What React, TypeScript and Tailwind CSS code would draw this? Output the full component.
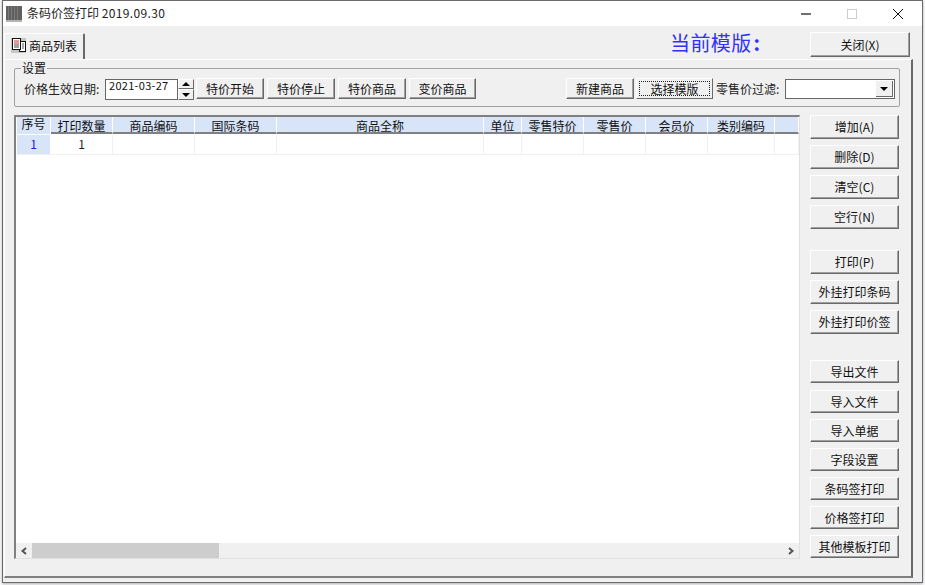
const CJK = "font-['Noto_Sans_CJK_SC','Liberation_Sans',sans-serif]";

function WinButton({ label, className = "" }: { label: string; className?: string }) {
  return (
    <div className={`flex items-center justify-center bg-[#f0f0f0] border border-t-white border-l-white border-r-[#696969] border-b-[#696969] shadow-[inset_-1px_-1px_0_#a0a0a0] text-[12px] text-[#111] ${className}`}>
      {label}
    </div>
  );
}

function Spacer({ h }: { h: string }) {
  return <div className={h} />;
}

const columns: [string, string][] = [
  ["打印数量", "w-[62px]"],
  ["商品编码", "w-[82px]"],
  ["国际条码", "w-[82px]"],
  ["商品全称", "w-[207px]"],
  ["单位", "w-[38px]"],
  ["零售特价", "w-[62px]"],
  ["零售价", "w-[62px]"],
  ["会员价", "w-[62px]"],
  ["类别编码", "w-[67px]"],
  ["", "w-[24px]"],
];

export default function App() {
  return (
    <div className={`w-[925px] h-[585px] overflow-hidden bg-white ${CJK}`}>
      <div className="ml-[2px] w-[921px] h-[583px] flex flex-col border border-[#6b6b6b] bg-[#f0f0f0] shadow-[0_1px_3px_#a8a8b0]">
        {/* Title bar */}
        <div className="h-[25px] shrink-0 bg-white flex items-center">
          <svg className="ml-[3px]" width="16" height="16" viewBox="0 0 16 16">
            <rect width="16" height="16" fill="#d8d8d8" />
            <path d="M1 0v14M4 0v14M7 0v14M10 0v14M13 0v14M15 0v14" stroke="#2e2e2e" strokeWidth="1.4" />
            <path d="M2.5 0v14M5.5 0v14M8.5 0v14M11.5 0v14" stroke="#7a7a7a" strokeWidth="1" />
            <rect y="14" width="16" height="2" fill="#b4b4b4" />
          </svg>
          <span className="ml-[5px] pb-[1px] text-[12px] text-[#222] whitespace-nowrap">
            条码价签打印 <span className="tracking-[0.35px]">2019.09.30</span>
          </span>
          <div className="ml-auto flex items-center text-[#222]">
            <svg width="46" height="25" viewBox="0 0 46 25"><path d="M18 13h10" stroke="#111" strokeWidth="1.2" /></svg>
            <svg width="46" height="25" viewBox="0 0 46 25"><rect x="18.5" y="8.5" width="9" height="9" fill="none" stroke="#ccc" /></svg>
            <svg width="46" height="25" viewBox="0 0 46 25" className="mr-[1px]"><path d="M18 8l10 10M28 8L18 18" stroke="#111" fill="none" /></svg>
          </div>
        </div>

        {/* Tab strip row */}
        <div className="h-[33px] shrink-0 flex pl-[1px] pr-[12px]">
          <div className="mt-[7px] w-[81px] h-[26px] -mb-px z-10 flex items-center bg-[#f0f0f0] border-t border-l border-t-white border-l-white border-r-2 border-r-[#696969] rounded-tr-[2px] pl-[6px] pb-[2px]">
            <svg width="15" height="15" viewBox="0 0 15 15" className="shrink-0">
              <rect width="15" height="15" fill="#c6c6c6" />
              <rect x="8.5" y="3.5" width="6" height="10" fill="#fff" stroke="#111" />
              <rect x="1.5" y="0.5" width="8" height="11" fill="#fff" stroke="#111" />
              <path d="M3 3h5M3 5h5" stroke="#d03030" />
              <path d="M3 7h5M3 9h5" stroke="#444" />
              <path d="M11 6h2M11 8h2M11 10h2" stroke="#555" />
            </svg>
            <span className="ml-[3px] text-[12px] text-[#111]">商品列表</span>
          </div>
          <span className="ml-[585px] mt-[3px] h-[27px] leading-[27px] text-[20px] tracking-[0.4px] text-[#3030ff] whitespace-nowrap">
            当前模版<span className="pl-[2px] font-bold">:</span>
          </span>
          <WinButton label="关闭(X)" className="ml-auto mt-[6px] w-[100px] h-[25px]" />
        </div>

        {/* Tab page */}
        <div className="ml-[1px] w-[909px] h-[519px] shrink-0 border-t border-l border-t-white border-l-white border-r-2 border-b-2 border-r-[#696969] border-b-[#808080] pl-[9px] pt-[9px] flex flex-col">
          {/* Group box */}
          <fieldset className="w-[885px] h-[45px] shrink-0 border border-[#a0a0a0] rounded-[2px] pl-[9px] pr-[4px] m-0 -mt-[7px]">
            <legend className="-ml-[3px] px-[1px] text-[12px] leading-[12px] text-[#111]">设置</legend>
            <div className="flex items-start h-[22px] mt-[4px]">
              <span className="w-[81px] text-[12px] leading-[22px] text-[#222] whitespace-nowrap">价格生效日期:</span>
              <div className="mt-[1px] w-[73px] h-[21px] bg-white border border-[#666] pl-[3px] text-[11px] tracking-[0.3px] leading-[11px] text-[#111]">2021-03-27</div>
              <div className="w-[16px] mt-[1px] h-[21px] flex flex-col">
                <div className="h-[10px] flex items-center justify-center bg-[#f0f0f0] border border-t-white border-l-white border-r-[#696969] border-b-[#696969]">
                  <div className="border-x-[4px] border-x-transparent border-b-[4px] border-b-black" />
                </div>
                <div className="h-[11px] flex items-center justify-center bg-[#f0f0f0] border border-t-white border-l-white border-r-[#696969] border-b-[#696969]">
                  <div className="border-x-[4px] border-x-transparent border-t-[4px] border-t-black" />
                </div>
              </div>
              <WinButton label="特价开始" className="ml-[2px] w-[68px] h-[21px]" />
              <WinButton label="特价停止" className="ml-[3px] w-[68px] h-[21px]" />
              <WinButton label="特价商品" className="ml-[3px] w-[68px] h-[21px]" />
              <WinButton label="变价商品" className="ml-[3px] w-[67px] h-[21px]" />
              <WinButton label="新建商品" className="ml-[90px] w-[68px] h-[21px]" />
              <div className="ml-[2px] w-[77px] h-[21px] p-[2px] bg-[#f0f0f0] border border-t-white border-l-white border-r-[#696969] border-b-[#696969]">
                <div className="w-full h-full flex items-center justify-center border border-dotted border-[#222] text-[12px] text-[#111]">选择模版</div>
              </div>
              <span className="ml-[3px] w-[69px] text-[12px] leading-[22px] text-[#222] whitespace-nowrap">零售价过滤:</span>
              <div className="mt-[1px] w-[110px] h-[20px] bg-white border border-[#666] flex justify-end p-[1px]">
                <div className="w-[17px] h-full flex items-center justify-center bg-[#f0f0f0] border-r border-b border-[#696969]">
                  <div className="border-x-[4px] border-x-transparent border-t-[4px] border-t-black" />
                </div>
              </div>
            </div>
          </fieldset>

          {/* Main row */}
          <div className="mt-[8px] flex flex-1 min-h-0">
            {/* Grid */}
            <div className="w-[786px] h-[444px] bg-white border-t-2 border-l-2 border-t-[#808080] border-l-[#808080] border-r border-b border-r-[#e0e0e0] border-b-[#e0e0e0] flex flex-col">
              <div className="flex flex-col flex-1 pl-[1px]">
                <div className="flex h-[18px] text-[12px] text-[#111]">
                  <div className="w-[34px] h-[17px] leading-[14px] bg-[#d8e4f8] border-r border-white text-center">序号</div>
                  {columns.map(([t, w], i) => (
                    <div key={i} className={`${w} shrink-0 h-[17px] leading-[17px] bg-[#d8e4f8] border-r border-white border-b-2 border-b-[#808080] text-center`}>{t}</div>
                  ))}
                </div>
                <div className="flex h-[20px] text-[12px] leading-[17px] border-b border-[#f0f0f0]">
                  <div className="w-[34px] bg-[#d8e4f8] border-r border-white text-center text-[#2020e0]">1</div>
                  {columns.map(([_, w], i) => (
                    <div key={i} className={`${w} shrink-0 border-r border-[#f0f0f0] text-center text-[#222]`}>{i === 0 ? "1" : ""}</div>
                  ))}
                </div>
              </div>
              {/* Scrollbar */}
              <div className="h-[15px] shrink-0 bg-[#f0f0f0] flex items-center">
                <div className="w-[16px] flex items-center justify-center">
                  <svg width="8" height="8" viewBox="0 0 8 8"><path d="M6 1L2.5 4L6 7" fill="none" stroke="#555" strokeWidth="2" /></svg>
                </div>
                <div className="w-[187px] h-full bg-[#cdcdcd]" />
                <div className="ml-auto w-[17px] flex items-center justify-center">
                  <svg width="8" height="8" viewBox="0 0 8 8"><path d="M2 1L5.5 4L2 7" fill="none" stroke="#555" strokeWidth="2" /></svg>
                </div>
              </div>
            </div>

            {/* Right buttons */}
            <div className="ml-[10px] w-[89px] flex flex-col">
              <WinButton label="增加(A)" className="h-[24px] shrink-0" />
              <Spacer h="h-[6px]" />
              <WinButton label="删除(D)" className="h-[24px] shrink-0" />
              <Spacer h="h-[6px]" />
              <WinButton label="清空(C)" className="h-[24px] shrink-0" />
              <Spacer h="h-[6px]" />
              <WinButton label="空行(N)" className="h-[24px] shrink-0" />
              <Spacer h="h-[21px]" />
              <WinButton label="打印(P)" className="h-[24px] shrink-0" />
              <Spacer h="h-[6px]" />
              <WinButton label="外挂打印条码" className="h-[24px] shrink-0" />
              <Spacer h="h-[6px]" />
              <WinButton label="外挂打印价签" className="h-[24px] shrink-0" />
              <Spacer h="h-[26px]" />
              <WinButton label="导出文件" className="h-[23px] shrink-0" />
              <Spacer h="h-[7px]" />
              <WinButton label="导入文件" className="h-[23px] shrink-0" />
              <Spacer h="h-[6px]" />
              <WinButton label="导入单据" className="h-[23px] shrink-0" />
              <Spacer h="h-[6px]" />
              <WinButton label="字段设置" className="h-[23px] shrink-0" />
              <Spacer h="h-[6px]" />
              <WinButton label="条码签打印" className="h-[23px] shrink-0" />
              <Spacer h="h-[6px]" />
              <WinButton label="价格签打印" className="h-[23px] shrink-0" />
              <Spacer h="h-[6px]" />
              <WinButton label="其他模板打印" className="h-[23px] shrink-0" />
            </div>
          </div>
        </div>
      </div>
    </div>
  );
}
